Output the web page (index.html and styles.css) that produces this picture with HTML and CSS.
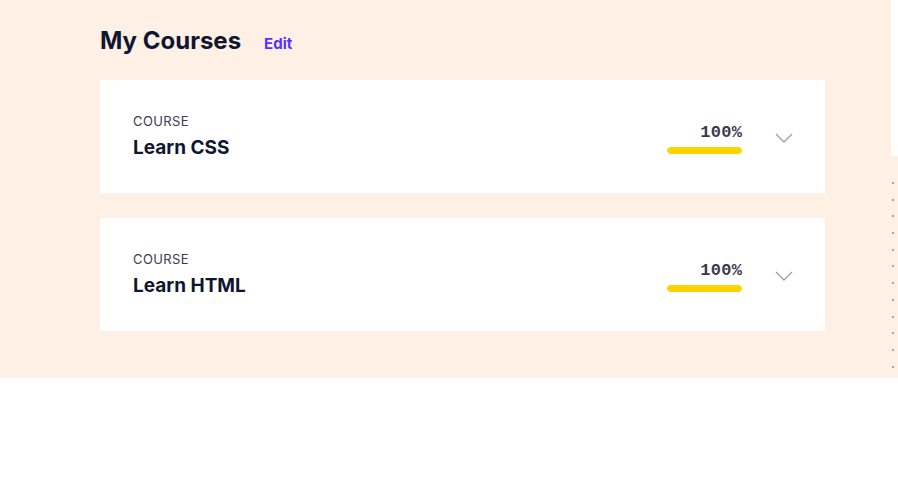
FILE: index.html
```html
<!DOCTYPE html>
<html>
<head>
<meta charset="utf-8">
<link rel="stylesheet" href="styles.css">
</head>
<body>
<div class="page">
  <main class="main">
    <div class="header">
      <h1 class="title">My Courses</h1>
      <a class="edit">Edit</a>
    </div>
    <div class="cards">
      <div class="card">
        <div class="info">
          <div class="label">COURSE</div>
          <div class="name">Learn CSS</div>
        </div>
        <div class="progress">
          <div class="pct">100%</div>
          <div class="bar"><div class="fill" style="width:100%"></div></div>
        </div>
        <svg class="chev" width="18" height="10" viewBox="0 0 18 10"><path d="M1 1 L9 9 L17 1" fill="none" stroke="#a0a0a8" stroke-width="1.4"/></svg>
      </div>
      <div class="card">
        <div class="info">
          <div class="label">COURSE</div>
          <div class="name">Learn HTML</div>
        </div>
        <div class="progress">
          <div class="pct">100%</div>
          <div class="bar"><div class="fill" style="width:100%"></div></div>
        </div>
        <svg class="chev" width="18" height="10" viewBox="0 0 18 10"><path d="M1 1 L9 9 L17 1" fill="none" stroke="#a0a0a8" stroke-width="1.4"/></svg>
      </div>
    </div>
  </main>
  <aside class="strip">
    <div class="strip-top"></div>
    <div class="dots">
      <span></span><span></span><span></span><span></span><span></span><span></span>
      <span></span><span></span><span></span><span></span><span></span><span></span>
    </div>
  </aside>
</div>
</body>
</html>
```
FILE: styles.css
```css
* { box-sizing: border-box; }
html, body { margin: 0; padding: 0; background: #fff; }
body { font-family: "Inter", "Noto Sans", sans-serif; color: #10162f; }

.page {
  display: flex;
  width: 898px;
  height: 378px;
}

.main {
  width: 891px;
  background: #fff0e5;
  padding: 26px 0 0 100px;
}

.header {
  display: flex;
  align-items: baseline;
  gap: 23px;
  height: 54px;
}

.title {
  margin: 0;
  font-size: 24px;
  font-weight: 700;
  letter-spacing: 0;
  color: #10162f;
}

.edit {
  font-size: 15px;
  font-weight: 700;
  color: #5533ff;
}

.cards {
  display: flex;
  flex-direction: column;
  gap: 25px;
  width: 725px;
}

.card {
  background: #fff;
  height: 113px;
  display: flex;
  align-items: center;
  padding: 0 32px 0 33px;
}

.info { flex: 1; }

.label {
  font-size: 13px;
  letter-spacing: 0.4px;
  color: #3d3d4e;
  line-height: 16px;
  margin-top: -2px;
}

.name {
  font-size: 19px;
  font-weight: 700;
  margin-top: 8px;
  line-height: 22px;
}

.progress {
  width: 75px;
  display: flex;
  flex-direction: column;
  align-items: flex-end;
  margin-right: 33px;
  margin-top: 4px;
}

.pct {
  font-family: "Liberation Mono", "DejaVu Sans Mono", monospace;
  font-weight: 700;
  font-size: 17px;
  letter-spacing: 0.3px;
  margin-right: -0.3px;
  line-height: 18px;
  color: #3a3a4a;
}

.bar {
  width: 75px;
  height: 7px;
  border-radius: 4px;
  margin-top: 5px;
  overflow: hidden;
}

.fill {
  height: 100%;
  background: #ffd300;
  border-radius: 4px;
}

.chev { margin-top: 2px; }

.strip {
  width: 7px;
  display: flex;
  flex-direction: column;
}

.strip-top {
  height: 156px;
  background: #fff;
}

.dots {
  flex: 1;
  background: #fff0e5;
  display: flex;
  flex-direction: column;
  gap: 14.7px;
  padding-top: 26px;
  padding-left: 1px;
}

.dots span {
  width: 2px;
  height: 2px;
  background: #8f8a88;
  border-radius: 1px;
}
```
